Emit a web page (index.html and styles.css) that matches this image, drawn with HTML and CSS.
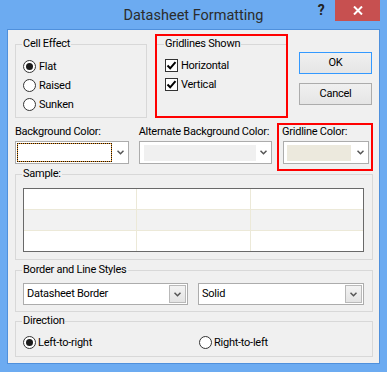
FILE: index.html
```html
<!DOCTYPE html>
<html lang="en">
<head>
  <meta charset="UTF-8" />
  <title>Datasheet Formatting</title>
  <link rel="stylesheet" href="styles.css">
</head>
<body>

<div class="window">
  <div class="titlebar">
    <span></span>
    <span class="title">Datasheet Formatting</span>
    <div class="caption-btns">
      <span class="help">?</span>
      <span class="close"><svg width="10" height="9" viewBox="0 0 10 9"><path d="M1 0.5 L9 8.5 M9 0.5 L1 8.5" stroke="#fff" stroke-width="2"/></svg></span>
    </div>
  </div>

  <div class="client">
    <div class="top-row">
      <fieldset class="group cell-effect">
        <legend>Cell Effect</legend>
        <div class="options">
          <div class="opt"><span class="radio checked"></span>Flat</div>
          <div class="opt"><span class="radio"></span>Raised</div>
          <div class="opt"><span class="radio"></span>Sunken</div>
        </div>
      </fieldset>

      <div class="mark gridlines-mark">
        <fieldset class="group gridlines">
          <legend>Gridlines Shown</legend>
          <div class="options">
            <div class="opt"><span class="check"><svg width="11" height="11" viewBox="0 0 11 11"><path d="M1.5 5.5 L4.2 8.3 L9.5 2.2" fill="none" stroke="#000" stroke-width="2"/></svg></span>Horizontal</div>
            <div class="opt"><span class="check"><svg width="11" height="11" viewBox="0 0 11 11"><path d="M1.5 5.5 L4.2 8.3 L9.5 2.2" fill="none" stroke="#000" stroke-width="2"/></svg></span>Vertical</div>
          </div>
        </fieldset>
      </div>

      <div class="buttons">
        <div class="btn default">OK</div>
        <div class="btn">Cancel</div>
      </div>
    </div>

    <div class="colors-row">
      <div class="field bg-field">
        <div class="label">Background Color:</div>
        <div class="combo">
          <span class="focus-rect"></span>
          <svg class="chevron" width="7" height="5" viewBox="0 0 7 5"><path d="M0.5 0.8 L3.5 3.8 L6.5 0.8" fill="none" stroke="#555" stroke-width="1.5"/></svg>
        </div>
      </div>
      <div class="field alt-field">
        <div class="label">Alternate Background Color:</div>
        <div class="combo">
          <span class="swatch alt-swatch"></span>
          <svg class="chevron" width="7" height="5" viewBox="0 0 7 5"><path d="M0.5 0.8 L3.5 3.8 L6.5 0.8" fill="none" stroke="#555" stroke-width="1.5"/></svg>
        </div>
      </div>
      <div class="mark grid-mark">
        <div class="label">Gridline Color:</div>
        <div class="combo">
          <span class="swatch grid-swatch"></span>
          <svg class="chevron" width="7" height="5" viewBox="0 0 7 5"><path d="M0.5 0.8 L3.5 3.8 L6.5 0.8" fill="none" stroke="#555" stroke-width="1.5"/></svg>
        </div>
      </div>
    </div>

    <fieldset class="group sample">
      <legend>Sample:</legend>
      <div class="sample-grid">
        <div class="cell"></div><div class="cell"></div><div class="cell"></div>
        <div class="cell alt"></div><div class="cell alt"></div><div class="cell alt"></div>
        <div class="cell"></div><div class="cell"></div><div class="cell"></div>
      </div>
    </fieldset>

    <fieldset class="group styles">
      <legend>Border and Line Styles</legend>
      <div class="styles-row">
        <div class="dd-combo border-combo">
          <span class="dd-text">Datasheet Border</span>
          <span class="dd-btn"><svg width="7" height="5" viewBox="0 0 7 5"><path d="M0.5 0.8 L3.5 3.8 L6.5 0.8" fill="none" stroke="#555" stroke-width="1.5"/></svg></span>
        </div>
        <div class="dd-combo line-combo">
          <span class="dd-text">Solid</span>
          <span class="dd-btn"><svg width="7" height="5" viewBox="0 0 7 5"><path d="M0.5 0.8 L3.5 3.8 L6.5 0.8" fill="none" stroke="#555" stroke-width="1.5"/></svg></span>
        </div>
      </div>
    </fieldset>

    <fieldset class="group direction">
      <legend>Direction</legend>
      <div class="direction-row">
        <div class="opt"><span class="radio checked"></span>Left-to-right</div>
        <div class="opt"><span class="radio"></span>Right-to-left</div>
      </div>
    </fieldset>
  </div>
</div>

</body>
</html>
```

FILE: styles.css
```css
* {
  box-sizing: border-box;
}
body {
  margin: 0;
  font-family: Roboto, "Liberation Sans", sans-serif;
  font-size: 11px;
  letter-spacing: -0.25px;
  color: #000;
  background-color: #6cabf1;
}
.window {
  width: 387px;
  height: 372px;
  background-color: #6cabf1;
}

/* title bar */
.titlebar {
  height: 29px;
  display: grid;
  grid-template-columns: 1fr auto 1fr;
}
.title {
  font-size: 14.5px;
  line-height: 31px;
  letter-spacing: 0;
  color: #2b2b2b;
}
.caption-btns {
  display: flex;
  justify-content: flex-end;
  align-items: flex-start;
}
.help {
  width: 14px;
  margin-right: 7px;
  font-size: 14px;
  font-weight: bold;
  line-height: 21px;
  text-align: center;
  color: #222;
}
.close {
  width: 45px;
  height: 21px;
  margin-right: 7px;
  background-color: #c75050;
  display: flex;
  align-items: center;
  justify-content: center;
}

/* client area */
.client {
  margin: 0 7px;
  height: 335px;
  border: 1px solid #4f90dc;
  background-color: #f0f0f0;
  padding: 0 6px 0 7px;
}
.group {
  margin: 0;
  padding: 0;
  min-width: 0;
  border: 1px solid #d8d8d8;
}
.group legend {
  margin-left: 6px;
  padding: 0 1px;
  line-height: 14px;
}
.opt {
  display: flex;
  align-items: center;
  height: 19px;
  white-space: nowrap;
}
.radio {
  width: 13px;
  height: 13px;
  margin-right: 3px;
  border: 1px solid #333;
  border-radius: 50%;
  background-color: #fff;
  display: flex;
  align-items: center;
  justify-content: center;
  flex-shrink: 0;
}
.radio.checked::after {
  content: "";
  width: 7px;
  height: 7px;
  border-radius: 50%;
  background-color: #1b1b1b;
}
.check {
  width: 13px;
  height: 13px;
  margin-right: 3px;
  border: 1px solid #333;
  background-color: #fff;
  display: flex;
  flex-shrink: 0;
}

/* top row */
.top-row {
  display: flex;
  align-items: flex-start;
  height: 88px;
}
.cell-effect {
  width: 132px;
  height: 81px;
  margin-top: 7px;
}
.cell-effect .options {
  padding: 6px 0 0 7px;
}
.mark {
  border: 2px solid #f00;
}
.gridlines-mark {
  width: 133px;
  height: 84px;
  margin: 4px 0 0 8px;
}
.gridlines {
  margin-top: 1px;
  border: none;
  border-top: 1px solid #d8d8d8;
}
.gridlines legend {
  margin-left: 7px;
}
.gridlines .options {
  padding: 5px 0 0 8px;
}
.buttons {
  display: flex;
  flex-direction: column;
  gap: 9px;
  margin: 22px 0 0 11px;
}
.btn {
  width: 73px;
  height: 22px;
  border: 1px solid #acacac;
  background: linear-gradient(#f0f0f0, #e5e5e5);
  line-height: 20px;
  text-align: center;
}
.btn.default {
  border-color: #3399ff;
}

/* colour pickers */
.colors-row {
  display: flex;
  align-items: flex-start;
  margin-top: 5px;
}
.field {
  padding-top: 2px;
}
.label {
  line-height: 14px;
  margin-bottom: 2px;
  white-space: nowrap;
}
.bg-field {
  width: 115px;
}
.alt-field {
  width: 135px;
  margin-left: 10px;
}
.grid-mark {
  width: 97px;
  height: 48px;
  margin: 0 0 -4px 5px;
  padding: 0 2px 0 4px;
}
.grid-mark .label {
  margin-left: -1px;
}
.combo {
  height: 23px;
  border: 1px solid #acacac;
  background-color: #fff;
  display: flex;
  align-items: center;
  padding-left: 1px;
}
.chevron {
  margin-left: auto;
  margin-right: 4px;
}
.focus-rect {
  width: 95px;
  height: 19px;
  border: 1px dotted #111;
  background: linear-gradient(#fff, #fff) padding-box, #e8962c border-box;
}
.swatch {
  height: 16px;
}
.alt-swatch {
  width: 112px;
  margin-left: 3px;
  background-color: #f0f0f0;
}
.grid-swatch {
  width: 64px;
  margin-left: 2px;
  background-color: #ece9dd;
}

/* sample */
.sample {
  height: 93px;
}
.sample-grid {
  width: 341px;
  height: 64px;
  margin: 7px 0 0 7px;
  border: 1px solid #696969;
  background-color: #ece9d8;
  display: grid;
  grid-template-columns: repeat(3, 1fr);
  grid-template-rows: repeat(3, 20px);
  gap: 1px;
}
.cell {
  background-color: #fff;
}
.cell.alt {
  background-color: #f2f2f2;
}

/* border and line styles */
.styles {
  height: 49px;
  margin-top: 3px;
}
.styles-row {
  display: flex;
  gap: 10px;
  padding: 6px 0 0 7px;
}
.dd-combo {
  height: 22px;
  border: 1px solid #acacac;
  background-color: #fff;
  padding: 1px;
  display: flex;
}
.border-combo {
  width: 165px;
}
.line-combo {
  width: 166px;
}
.dd-text {
  padding-left: 2px;
  line-height: 18px;
}
.dd-btn {
  width: 17px;
  height: 18px;
  margin-left: auto;
  border: 1px solid #b9b9b9;
  background: linear-gradient(#f3f3f3, #e3e3e3);
  display: flex;
  align-items: center;
  justify-content: center;
}

/* direction */
.direction {
  height: 43px;
  margin-top: 2px;
}
.direction-row {
  display: grid;
  grid-template-columns: 176px 1fr;
  padding: 5px 0 0 7px;
}
.direction-row .radio {
  margin-right: 2px;
}
```
